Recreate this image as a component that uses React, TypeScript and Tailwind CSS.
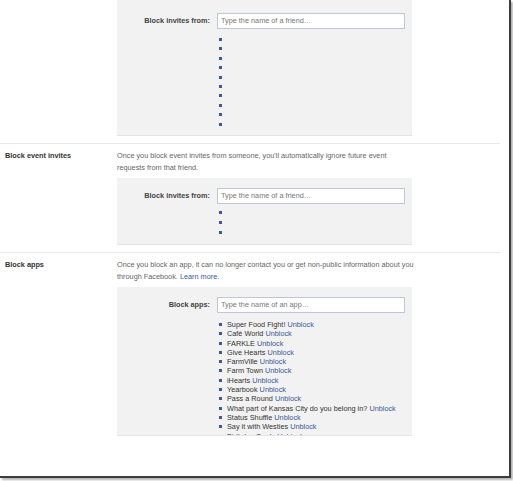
import React from "react";

const blockedApps = [
  "Super Food Fight!",
  "Café World",
  "FARKLE",
  "Give Hearts",
  "FarmVille",
  "Farm Town",
  "iHearts",
  "Yearbook",
  "Pass a Round",
  "What part of Kansas City do you belong in?",
  "Status Shuffle",
  "Say it with Westies",
  "Birthday Cards",
];

const Bullet = () => (
  <span className="mt-[3px] mr-[5px] h-[3px] w-[3px] shrink-0 bg-[#3b5998]" />
);

// gray panel with a label on the left and a typeahead box on the right
const BlockBox = ({
  label,
  placeholder,
  heightClass,
  listClass,
  children,
}: {
  label: string;
  placeholder: string;
  heightClass: string;
  listClass: string;
  children: React.ReactNode;
}) => (
  <div
    className={`overflow-hidden border-b border-[#e4e4e4] bg-[#f2f2f2] ${heightClass}`}
  >
    <div className="flex items-center">
      <div className="w-[100px] pr-[7px] text-right font-bold text-[#444]">
        {label}
      </div>
      <div className="flex h-[16px] w-[188px] items-center border border-[#bdc7d8] bg-white pl-[3px] text-[#777]">
        {placeholder}
      </div>
    </div>
    <ul className={`ml-[102px] flex flex-col ${listClass}`}>{children}</ul>
  </div>
);

const Section = ({
  title,
  desc,
  last,
  children,
}: {
  title: string;
  desc: React.ReactNode;
  last?: boolean;
  children: React.ReactNode;
}) => (
  <section
    className={`flex w-[500px] pt-[6px] ${
      last ? "" : "border-b border-[#e9e9e9] pb-[7px]"
    }`}
  >
    <div className="w-[117px] pl-[5px] font-bold leading-[11.5px] text-[#333]">
      {title}
    </div>
    <div className="w-[295px]">
      <p className="whitespace-nowrap leading-[11.5px] text-[#666]">{desc}</p>
      <div className="mt-[5px]">{children}</div>
    </div>
  </section>
);

export default function App() {
  return (
    <div className="h-[481px] w-[513px] bg-white">
      <div
        className="h-[478px] w-[511px] overflow-hidden border-r-2 border-b-2 border-[#3c3c3c] bg-white text-[7.3px] shadow-[2px_2px_2px_rgba(0,0,0,0.3)]"
        style={{ fontFamily: '"Liberation Sans", Arial, sans-serif' }}
      >
        {/* tail of the previous section */}
        <div className="flex w-[500px] border-b border-[#e9e9e9] pb-[7px]">
          <div className="w-[117px]" />
          <div className="w-[295px]">
            <BlockBox
              label="Block invites from:"
              placeholder="Type the name of a friend…"
              heightClass="h-[136px] pt-[13px]"
              listClass="mt-[6px]"
            >
              {Array.from({ length: 10 }).map((_, i) => (
                <li key={i} className="flex h-[9.4px]">
                  <Bullet />
                </li>
              ))}
            </BlockBox>
          </div>
        </div>

        <Section
          title="Block event invites"
          desc={
            <>
              Once you block event invites from someone, you'll automatically
              ignore future event
              <br />
              requests from that friend.
            </>
          }
        >
          <BlockBox
            label="Block invites from:"
            placeholder="Type the name of a friend…"
            heightClass="h-[67px] pt-[10px]"
            listClass="mt-[4px]"
          >
            {Array.from({ length: 3 }).map((_, i) => (
              <li key={i} className="flex h-[9.8px]">
                <Bullet />
              </li>
            ))}
          </BlockBox>
        </Section>

        <Section
          last
          title="Block apps"
          desc={
            <>
              Once you block an app, it can no longer contact you or get
              non-public information about you
              <br />
              through Facebook. <a className="text-[#3b5998]">Learn more.</a>
            </>
          }
        >
          <BlockBox
            label="Block apps:"
            placeholder="Type the name of an app…"
            heightClass="h-[149px] pt-[10px]"
            listClass="mt-[7px]"
          >
            {blockedApps.map((name) => (
              <li key={name} className="flex h-[9.3px] leading-[9.3px] text-[#333]">
                <Bullet />
                <span className="whitespace-nowrap">
                  {name} <a className="text-[#3b5998]">Unblock</a>
                </span>
              </li>
            ))}
          </BlockBox>
        </Section>
      </div>
    </div>
  );
}
